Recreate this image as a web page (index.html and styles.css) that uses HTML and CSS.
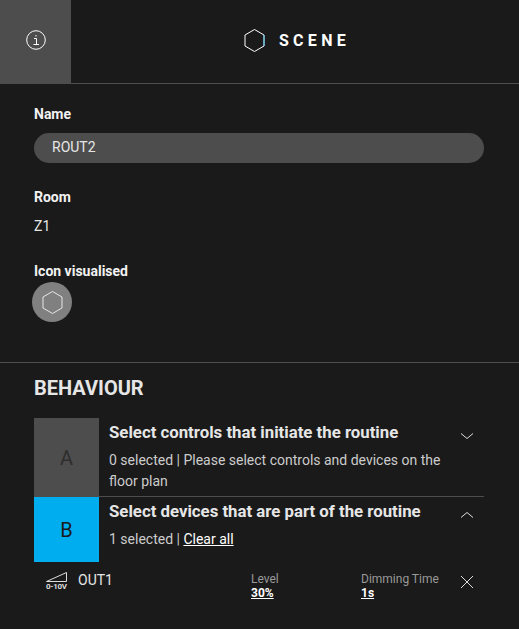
FILE: index.html
```html
<!DOCTYPE html>
<html lang="en">
<head>
    <meta charset="UTF-8">
    <meta name="viewport" content="width=device-width, initial-scale=1.0">
    <title>Scene</title>
    <link rel="stylesheet" href="styles.css">
</head>
<body>

    <header class="top-bar">
        <div class="info-tab">
            <svg width="20" height="20" viewBox="0 0 20 20">
                <circle cx="10" cy="10" r="9.300" fill="none" stroke="#fff" stroke-width="1"/>
                <path d="M8 8.500h2.500v5.500M7.500 14.500h5.500M10 5v1.500" fill="none" stroke="#fff" stroke-width="1"/>
            </svg>
        </div>
        <div class="title-box">
            <svg width="21" height="23" viewBox="0 0 21 23">
                <path d="M10.500 .5 20 6v11l-9.500 5.500L1 17V6z" fill="none" stroke="#fff" stroke-width="1"/>
                <path d="M20 6v11" fill="none" stroke="#4fc3f0" stroke-width="1"/>
            </svg>
            <span class="title-text">SCENE</span>
        </div>
    </header>

    <section class="details">
        <div class="field-label">Name</div>
        <div class="name-pill">ROUT2</div>

        <div class="field-label room-label">Room</div>
        <div class="room-value">Z1</div>

        <div class="field-label icon-label">Icon visualised</div>
        <div class="icon-circle">
            <svg width="21" height="23" viewBox="0 0 21 23">
                <path d="M10.500 .5 20 6v11l-9.500 5.500L1 17V6z" fill="none" stroke="#e6e6e6" stroke-width="1"/>
            </svg>
        </div>
    </section>

    <section class="behaviour">
        <h2>BEHAVIOUR</h2>

        <div class="step step-a">
            <div class="step-letter">A</div>
            <div class="step-body">
                <div class="step-title">Select controls that initiate the routine</div>
                <div class="step-text">0 selected | Please select controls and devices on the floor plan</div>
            </div>
            <svg class="chevron" width="14" height="8" viewBox="0 0 14 8">
                <path d="M1 1.500 7 6.500l6-5" fill="none" stroke="#ddd" stroke-width="1"/>
            </svg>
        </div>

        <div class="step step-b">
            <div class="step-letter">B</div>
            <div class="step-body">
                <div class="step-title">Select devices that are part of the routine</div>
                <div class="step-text">1 selected | <a href="#">Clear all</a></div>
            </div>
            <svg class="chevron" width="14" height="8" viewBox="0 0 14 8">
                <path d="M1 6.500 7 1.500l6 5" fill="none" stroke="#ddd" stroke-width="1"/>
            </svg>
        </div>

        <div class="device-row">
            <div class="device-icon">
                <svg width="21" height="10" viewBox="0 0 21 10">
                    <path d="M0.500 9.500 20.500 0.500V9.500z" fill="none" stroke="#ddd" stroke-width="1"/>
                </svg>
                <span>0-10V</span>
            </div>
            <div class="device-name">OUT1</div>
            <div class="device-level">
                <div class="device-caption">Level</div>
                <a href="#">30%</a>
            </div>
            <div class="device-time">
                <div class="device-caption">Dimming Time</div>
                <a href="#">1s</a>
            </div>
            <svg class="remove" width="14" height="14" viewBox="0 0 14 14">
                <path d="M1 1l12 12M13 1 1 13" fill="none" stroke="#ddd" stroke-width="1"/>
            </svg>
        </div>
    </section>

</body>
</html>
```

FILE: styles.css
```css
body {
    font-family: 'Roboto', 'Liberation Sans', sans-serif;
    margin: 0;
    padding: 0;
    background-color: #1a1a1a;
    color: #e6e6e6;
    font-size: 14px;
}

a {
    color: #fff;
}

.top-bar {
    display: flex;
    height: 83px;
    border-bottom: 1px solid #4d4d4d;
}

.info-tab {
    display: flex;
    align-items: center;
    justify-content: center;
    width: 71px;
    background-color: #4d4d4d;
    padding-bottom: 3px;
    box-sizing: border-box;
}

.title-box {
    flex: 1;
    display: flex;
    align-items: center;
    justify-content: center;
    gap: 14px;
    padding: 0 0 3px 4px;
}

.title-text {
    color: #fff;
    font-size: 16px;
    font-weight: 700;
    letter-spacing: 4.300px;
}

.details {
    padding: 22px 35px 0 34px;
    height: 279px;
    box-sizing: border-box;
    border-bottom: 1px solid #4d4d4d;
}

.field-label {
    font-weight: 700;
    line-height: 16px;
    color: #f2f2f2;
}

.name-pill {
    margin-top: 11px;
    height: 30px;
    line-height: 29px;
    padding-left: 18px;
    border-radius: 15px;
    background-color: #4d4d4d;
}

.room-label {
    margin-top: 26px;
}

.room-value {
    margin-top: 13px;
    line-height: 16px;
}

.icon-label {
    margin-top: 29px;
}

.icon-circle {
    display: flex;
    align-items: center;
    justify-content: center;
    width: 40px;
    height: 40px;
    margin: 3px 0 0 -2px;
    border-radius: 50%;
    background-color: #808080;
}

.behaviour {
    padding: 0 35px 0 34px;
}

.behaviour h2 {
    margin: 15px 0 19px;
    font-size: 20px;
    line-height: 21px;
    color: #e6e6e6;
}

.step {
    display: flex;
    position: relative;
}

.step-a {
    height: 78px;
    border-bottom: 1px solid #4d4d4d;
}

.step-a .step-letter {
    height: 79px;
    background-color: #4d4d4d;
    color: #2e2e2e;
}

.step-b {
    height: 65px;
}

.step-b .step-letter {
    background-color: #00aeef;
}

.step-letter {
    flex: none;
    display: flex;
    align-items: center;
    justify-content: center;
    width: 65px;
    font-size: 20px;
    color: #1a1a1a;
}

.step-body {
    flex: 1;
    padding: 5px 40px 0 10px;
}

.step-title {
    font-size: 16.800px;
    font-weight: 700;
    line-height: 19px;
    color: #e6e6e6;
}

.step-text {
    margin-top: 8px;
    line-height: 21px;
    color: #cccccc;
}

.chevron {
    position: absolute;
    right: 10px;
    top: 14px;
}

.device-row {
    display: flex;
    position: relative;
    padding: 10px 0 0 12px;
}

.device-icon {
    width: 32px;
    display: flex;
    flex-direction: column;
}

.device-icon span {
    font-size: 8px;
    font-weight: 700;
    line-height: 9px;
    letter-spacing: -0.300px;
    color: #ddd;
}

.device-name {
    width: 173px;
    line-height: 16px;
    color: #e6e6e6;
}

.device-level {
    width: 110px;
}

.device-caption {
    font-size: 12px;
    line-height: 14px;
    color: #999;
}

.device-level a,
.device-time a {
    display: block;
    font-size: 12px;
    font-weight: 700;
    line-height: 15px;
}

.remove {
    position: absolute;
    right: 10px;
    top: 13px;
}
```
